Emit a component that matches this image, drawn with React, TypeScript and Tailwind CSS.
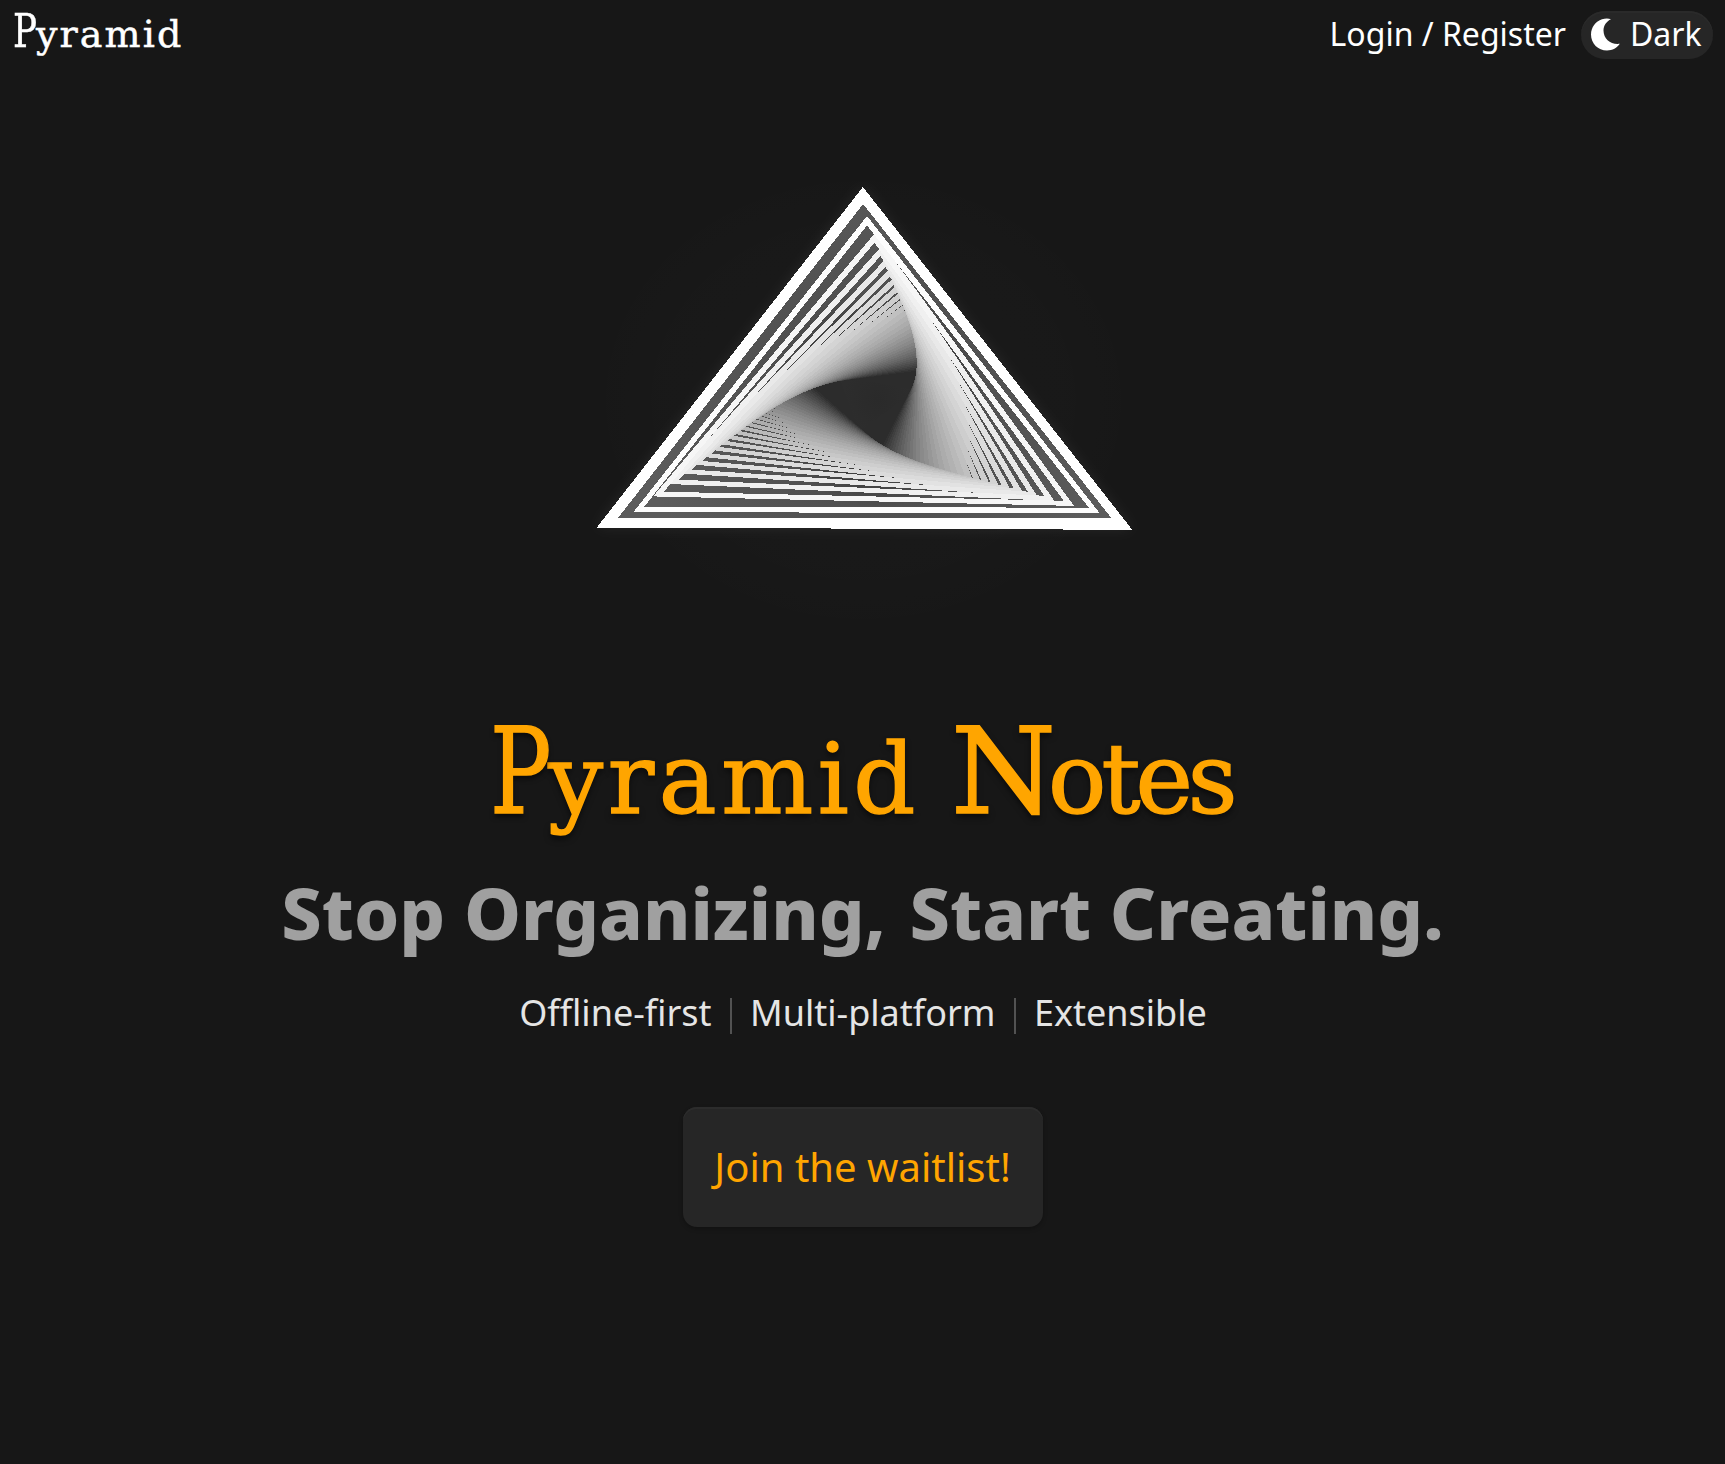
const RING_COUNT = 46;
const RADIUS_X = 309;
const RADIUS_Y = 227;

type Ring = { path: string; fill: string };

const OUTER = [
  [0, -1],
  [0.866, 0.5],
  [-0.866, 0.5],
];

/** Builds the path of one twisted frame; higher indexes lie deeper in the tunnel. */
function buildRing(index: number): Ring {
  const scale = 1 / (1.148 + 0.123 * Math.pow(index - 1, 0.94));
  const angle = ((0.1 + 1.66 * (index - 1)) * Math.PI) / 180;
  const cx = 873.5 - 8.5 * scale;
  const cy = 395 + 21.5 * scale;
  const inset = Math.pow(0.87 / scale, 0.88) * 0.046;
  const bottom = 0.55 + 0.7 * scale;
  const inner = [
    [0, -1 + inset * 1.05],
    [0.866 * (1 - inset), 0.5 * (1 - inset * bottom)],
    [-0.866 * (1 - inset), 0.5 * (1 - inset * bottom)],
  ];
  const trace = (points: number[][]) =>
    points
      .map(([x, y]) => {
        const rx = x * Math.cos(angle) - y * Math.sin(angle);
        const ry = x * Math.sin(angle) + y * Math.cos(angle);
        return `${(cx + rx * scale * RADIUS_X).toFixed(2)} ${(cy + ry * scale * RADIUS_Y).toFixed(2)}`;
      })
      .join("L");
  const shade = Math.round(Math.max(44, 260 - 6.8 * index));
  return {
    path: `M${trace(OUTER)}ZM${trace(inner)}Z`,
    fill: `rgb(${shade} ${shade} ${shade})`,
  };
}

const rings = Array.from({ length: RING_COUNT }, (_, i) => buildRing(RING_COUNT - i));

function PyramidArt() {
  return (
    <svg viewBox="562.5 100 600 520" className="h-[520px] w-[600px]" aria-hidden="true">
      <defs>
        <radialGradient id="haze" gradientUnits="userSpaceOnUse" cx="863" cy="400" r="280" gradientTransform="translate(0 60) scale(1 .85)">
          <stop offset="0" stopColor="#fff" stopOpacity=".012" />
          <stop offset=".7" stopColor="#fff" stopOpacity=".008" />
          <stop offset="1" stopColor="#fff" stopOpacity="0" />
        </radialGradient>
        <radialGradient id="well" gradientUnits="userSpaceOnUse" cx="877" cy="400" r="240">
          <stop offset="0" stopColor="#2a2a2a" />
          <stop offset=".2" stopColor="#2e2e2e" />
          <stop offset=".45" stopColor="#505050" />
          <stop offset="1" stopColor="#5c5c5c" />
        </radialGradient>
        <filter id="glow" x="-20%" y="-20%" width="140%" height="140%">
          <feGaussianBlur stdDeviation="7" />
        </filter>
      </defs>
      <ellipse cx="863" cy="400" rx="290" ry="238" fill="url(#haze)" />
      <path d="M862.4 187.5L1131.7 529.5L596.5 527.3Z" fill="#fff" opacity=".07" filter="url(#glow)" />
      <path d="M862.4 195L1120 524L608 524Z" fill="url(#well)" />
      <g shapeRendering="crispEdges" fillRule="evenodd">
        {rings.map((ring) => (
          <path key={ring.path} d={ring.path} fill={ring.fill} />
        ))}
        <path
          d="M862.4 187L1131.8 529.8L596.3 527.5ZM862.6 204L617.8 517.6L1111.2 518.4Z"
          fill="#fff"
        />
      </g>
    </svg>
  );
}

function Moon() {
  return (
    <svg viewBox="0 0 29 33" className="-mt-0.5 h-[33px] w-[29px]" fill="currentColor" aria-hidden="true">
      <path d="M20 1.2C17.5.4 14 .4 11 1.3C4.600 3.300 0 9.500 0 16.500C0 25.500 7 32.500 16 32.500C21.500 32.500 26 29.900 28.800 25.800C20 27 12.500 21 12.500 12.500C12.500 7.500 15.500 3.200 20 1.200Z" />
    </svg>
  );
}

export default function App() {
  return (
    <div className="flex min-h-[1464px] w-full flex-col overflow-hidden bg-[#171717] font-['Noto_Sans',sans-serif] text-white">
      <header className="flex h-[70px] items-center justify-between pr-3 pl-[13px]">
        <div className="flex h-[70px] items-baseline font-['DejaVu_Serif',serif] leading-[61px] [-webkit-text-stroke:0.5px_#fff]">
          <span className="inline-block w-[23px] origin-left scale-x-[0.76] text-[47px]">P</span>
          <span className="text-[38px] tracking-[2.1px]">yramid</span>
        </div>
        <nav className="flex items-center gap-[15px] text-[32px] leading-[48px]">
          <a className="-mt-[3px]">Login / Register</a>
          <button className="flex h-12 w-[132px] items-center gap-[10px] rounded-full bg-[#262626] pl-[10px] shadow-[inset_0_2px_0_#2a2a2a]">
            <Moon />
            <span className="-mt-[3px]">Dark</span>
          </button>
        </nav>
      </header>

      <main className="flex flex-col items-center pt-[30px]">
        <PyramidArt />
        <h1 className="mt-[62px] flex h-[181px] items-baseline font-['DejaVu_Serif',serif] leading-[180px] whitespace-pre text-[#ffa500] [-webkit-text-stroke:1.5px_#ffa500] [text-shadow:0_4px_6px_rgb(0_0_0/0.6)]">
          <span className="-ml-[2px] inline-block w-[58px] origin-left scale-x-[0.76] text-[120px]">P</span>
          <span className="text-[97px] tracking-[4.6px]">yramid</span>
          <span className="ml-[31px] text-[120px] tracking-[-8px]">N</span>
          <span className="text-[97px] tracking-[-5px]">otes</span>
        </h1>
        <h2 className="text-[72px] leading-[98px] font-extrabold text-[#a0a0a0]">
          <span className="mr-[5px]">Stop Organizing,</span> Start Creating.
        </h2>
        <div className="mt-[25px] flex items-center pl-px text-[36px] leading-[54px] text-[#e5e5e5]">
          <span>Offline-first</span>
          <span className="mr-[18px] ml-[18.5px] mt-[5px] h-9 w-0.5 bg-[#525252]" />
          <span>Multi-platform</span>
          <span className="mr-[18px] ml-[18.5px] mt-[5px] h-9 w-0.5 bg-[#525252]" />
          <span>Extensible</span>
        </div>
        <button className="mt-[67px] h-[120px] w-[360px] rounded-[14px] bg-[#262626] text-[40px] text-[#ffa500] shadow-[inset_0_2px_0_#2c2c2c,0_2px_4px_rgb(0_0_0/0.25)]">
          Join the waitlist!
        </button>
      </main>
    </div>
  );
}
